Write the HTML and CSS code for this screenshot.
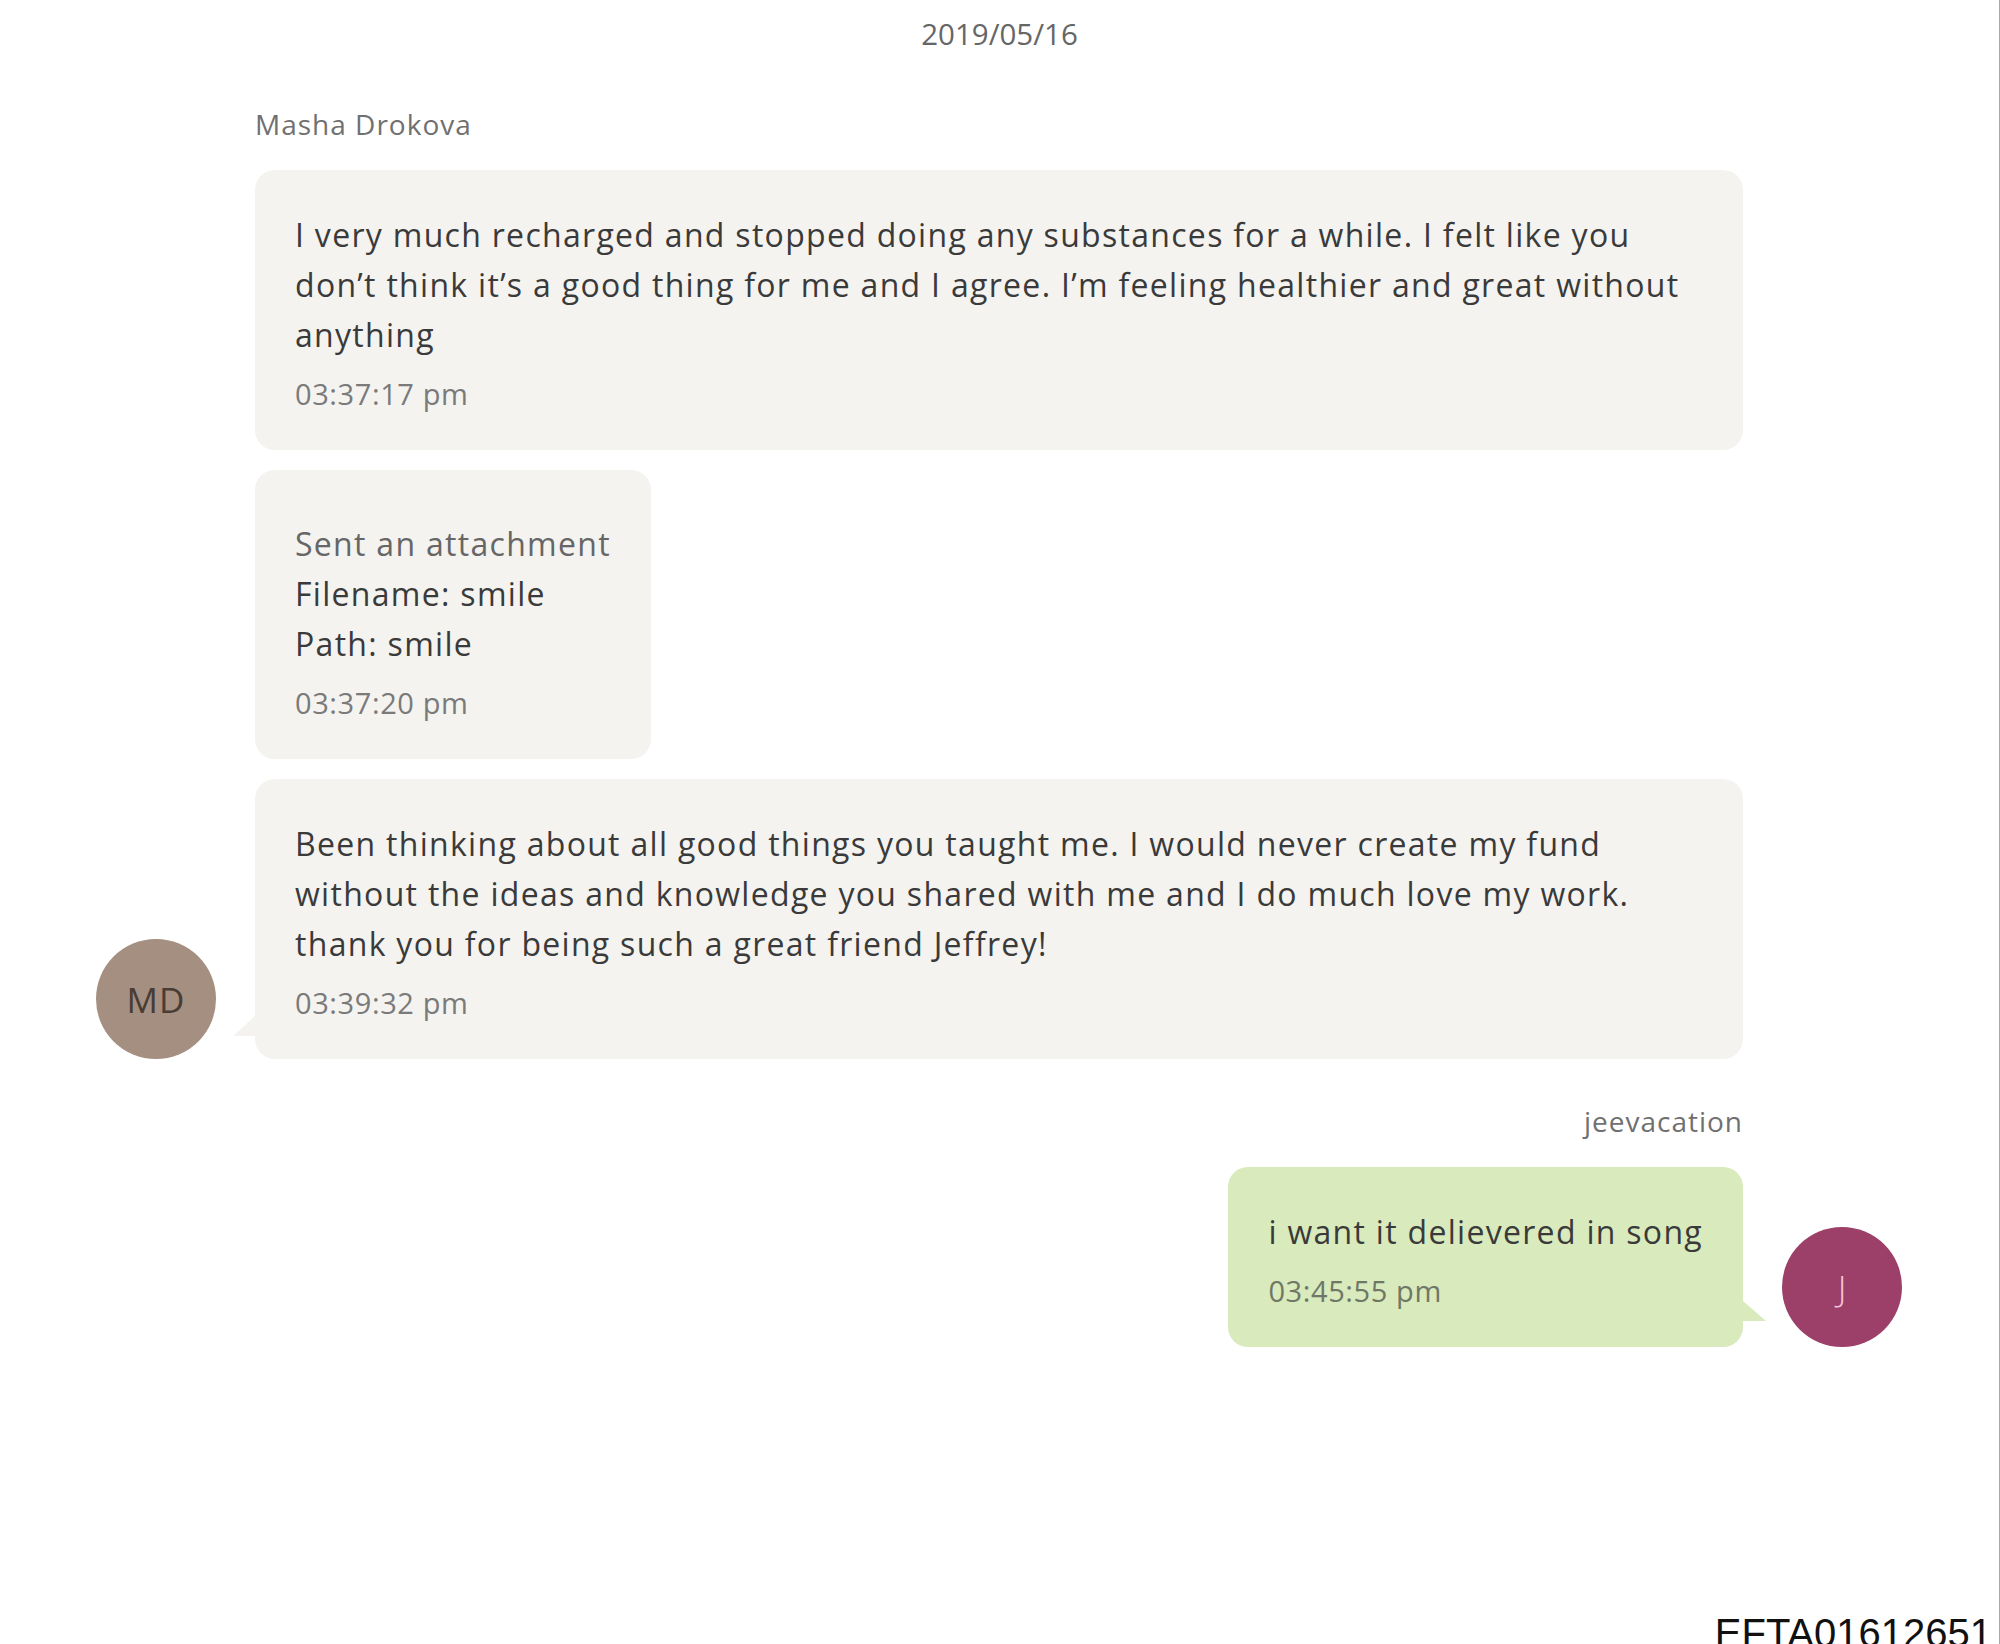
FILE: index.html
```html
<!DOCTYPE html>
<html lang="en">

<head>
    <meta charset="UTF-8">
    <title>Conversation</title>
    <meta name="viewport" content="width=device-width, initial-scale=1">
    <link rel="stylesheet" href="styles.css">
</head>

<body>
    <div class="page">
        <div class="day">2019/05/16</div>

        <div class="group incoming">
            <div class="avatar-slot">
                <div class="avatar avatar-md">MD</div>
            </div>
            <div class="messages">
                <div class="sender">Masha Drokova</div>
                <div class="bubble">
                    <p class="text">I very much recharged and stopped doing any substances for a while. I felt like you don’t think it’s a good thing for me and I agree. I’m feeling healthier and great without anything</p>
                    <div class="time">03:37:17 pm</div>
                </div>
                <div class="bubble attachment">
                    <p class="note">Sent an attachment</p>
                    <p class="text">Filename: smile</p>
                    <p class="text">Path: smile</p>
                    <div class="time">03:37:20 pm</div>
                </div>
                <div class="bubble last">
                    <p class="text">Been thinking about all good things you taught me. I would never create my fund without the ideas and knowledge you shared with me and I do much love my work. thank you for being such a great friend Jeffrey!</p>
                    <div class="time">03:39:32 pm</div>
                </div>
            </div>
            <div class="avatar-slot"></div>
        </div>

        <div class="group outgoing">
            <div class="avatar-slot"></div>
            <div class="messages">
                <div class="sender">jeevacation</div>
                <div class="bubble mine last">
                    <p class="text">i want it delievered in song</p>
                    <div class="time">03:45:55 pm</div>
                </div>
            </div>
            <div class="avatar-slot">
                <div class="avatar avatar-j">J</div>
            </div>
        </div>

        <div class="stamp">EFTA01612651</div>
    </div>
</body>

</html>
```

FILE: styles.css
```css
html,
body {
    margin: 0;
    padding: 0;
    background: #fff;
}

body {
    font-family: 'Open Sans', 'Noto Sans', sans-serif;
    color: #3a3a3a;
    overflow: hidden;
}

.page {
    height: 1644px;
    box-sizing: border-box;
    padding: 14px 0 0 0;
    border-right: 1px solid #a8a8a8;
    display: flex;
    flex-direction: column;
    overflow: hidden;
}

.day {
    text-align: center;
    font-size: 29.5px;
    line-height: 40px;
    color: #666;
}

.group {
    display: flex;
    gap: 39px;
    padding: 0 97px 0 96px;
    margin-top: 50px;
}

.group.outgoing {
    margin-top: 42px;
}

.avatar-slot {
    width: 120px;
    flex-shrink: 0;
    display: flex;
    align-items: flex-end;
}

.avatar {
    width: 120px;
    height: 120px;
    border-radius: 50%;
    display: flex;
    align-items: center;
    justify-content: center;
    font-size: 35px;
}

.avatar-md {
    background: #a48f81;
    color: #483c34;
    letter-spacing: 1px;
}

.avatar-j {
    background: #9c3f69;
    color: #f6c6dc;
    font-weight: 300;
}

.messages {
    flex: 1;
    min-width: 0;
    display: flex;
    flex-direction: column;
    align-items: flex-start;
    gap: 20px;
}

.outgoing .messages {
    align-items: flex-end;
}

.sender {
    font-size: 28px;
    letter-spacing: 1px;
    line-height: 40px;
    color: #707070;
    margin-bottom: 6px;
}

.bubble {
    position: relative;
    box-sizing: border-box;
    max-width: 100%;
    background: #f4f3f0;
    border-radius: 20px;
    padding: 40px 40px 31px 40px;
}

.bubble.attachment {
    padding-top: 49px;
}

.bubble.mine {
    background: #d9eabd;
}

.text,
.note {
    margin: 0;
    font-size: 32px;
    letter-spacing: 1.3px;
    line-height: 50px;
}

.note {
    color: #666;
}

.time {
    margin-top: 9px;
    font-size: 29px;
    letter-spacing: 0.6px;
    line-height: 50px;
    color: #7a7a7a;
}

.mine .time {
    color: #6f7866;
}

/* little tails pointing at the avatar */
.incoming .bubble.last::after {
    content: '';
    position: absolute;
    left: -22px;
    bottom: 23px;
    border-top: 20px solid transparent;
    border-right: 22px solid #f4f3f0;
}

.outgoing .bubble.last::after {
    content: '';
    position: absolute;
    right: -23px;
    bottom: 26px;
    border-top: 20px solid transparent;
    border-left: 23px solid #d9eabd;
}

.stamp {
    margin-top: auto;
    margin-bottom: -9px;
    padding-right: 7px;
    text-align: right;
    font-family: 'Liberation Sans', Arial, sans-serif;
    font-size: 40px;
    line-height: 40px;
    color: #111;
}
```
